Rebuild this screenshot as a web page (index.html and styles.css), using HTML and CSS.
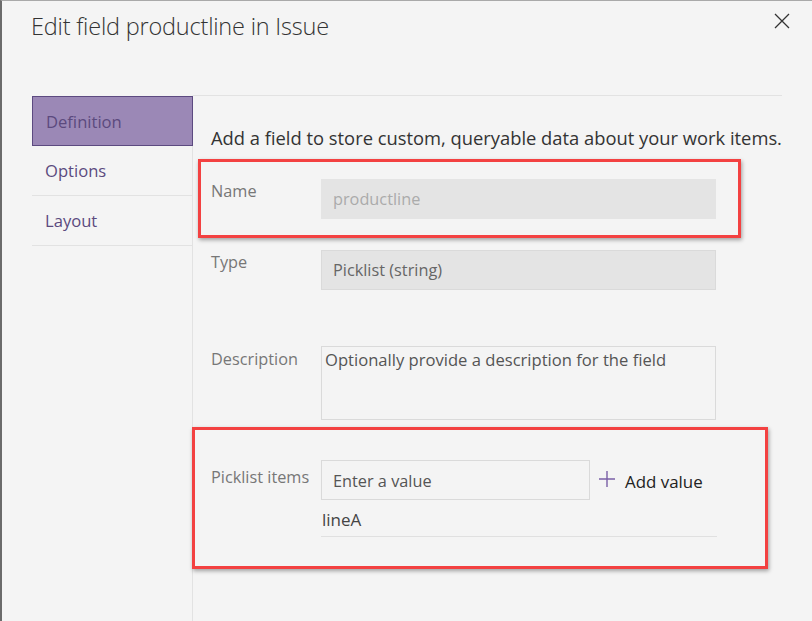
FILE: index.html
```html
<!DOCTYPE html>
<html>
<head>
<meta charset="utf-8">
<link rel="stylesheet" href="styles.css">
</head>
<body>
<div class="dialog">
  <div class="header">
    <h1 class="title">Edit field productline in Issue</h1>
    <button class="close" aria-label="Close">
      <svg width="16" height="16" viewBox="0 0 16 16"><path d="M1 1 L15 15 M15 1 L1 15" stroke="#333" stroke-width="1.3" fill="none"/></svg>
    </button>
  </div>
  <div class="body">
    <nav class="nav">
      <div class="nav-item active">Definition</div>
      <div class="nav-item">Options</div>
      <div class="nav-item">Layout</div>
    </nav>
    <div class="content">
      <p class="intro">Add a field to store custom, queryable data about your work items.</p>
      <div class="row row-name">
        <label class="label">Name</label>
        <div class="input disabled faint">productline</div>
      </div>
      <div class="row row-type">
        <label class="label">Type</label>
        <div class="input disabled bordered">Picklist (string)</div>
      </div>
      <div class="row row-desc">
        <label class="label">Description</label>
        <div class="textarea">Optionally provide a description for the field</div>
      </div>
      <div class="row row-pick">
        <label class="label">Picklist items</label>
        <div class="pick">
          <div class="pick-top">
            <div class="input value-input">Enter a value</div>
            <div class="add">
              <svg width="18" height="18" viewBox="0 0 18 18"><path d="M9 1 V17 M1 9 H17" stroke="#7a5fa6" stroke-width="1.4" fill="none"/></svg>
              <span>Add value</span>
            </div>
          </div>
          <div class="pick-item">lineA</div>
        </div>
      </div>
    </div>
  </div>
  <div class="highlight hl-1"></div>
  <div class="highlight hl-2"></div>
</div>
</body>
</html>
```

FILE: styles.css
```css
* { box-sizing: border-box; }
html, body { margin: 0; padding: 0; }
body {
  font-family: "Open Sans", "Noto Sans", sans-serif;
  background: #f4f4f4;
  color: #333;
}
.dialog {
  position: relative;
  width: 812px;
  height: 621px;
  background: #f4f4f4;
  border-top: 1px solid #a9a9a9;
  border-left: 2px solid #6b6b6b;
  overflow: hidden;
}
.header {
  display: flex;
  justify-content: space-between;
  align-items: flex-start;
  height: 94px;
  padding-left: 29px;
  padding-right: 22px;
}
.title {
  margin: 9px 0 0 0;
  font-size: 23.5px;
  font-weight: 300;
  letter-spacing: -0.2px;
  color: #333;
  line-height: 32px;
}
.close {
  margin-top: 12px;
  border: 0;
  background: none;
  padding: 0;
  width: 16px;
  height: 16px;
}
.body {
  display: flex;
  margin-left: 30px;
  margin-right: 30px;
  height: 526px;
}
.nav {
  width: 161px;
  flex: none;
  border-right: 1px solid #e2e2e2;
  border-top: 1px solid transparent;
}
.nav-item {
  height: 50px;
  line-height: 49px;
  padding-left: 13px;
  font-size: 16.6px;
  color: #5b4a7e;
  border-bottom: 1px solid #e2e2e2;
}
.nav-item.active {
  background: #9b88b6;
  border: 1px solid #5c4a80;
  color: #5b4a7e;
  margin-right: -1px;
}
.content {
  flex: 1;
  border-top: 1px solid #e2e2e2;
  padding-left: 18px;
}
.intro {
  margin: 31px 0 0 0;
  font-size: 18.35px;
  line-height: 22px;
  color: #333;
  white-space: nowrap;
}
.row {
  display: flex;
}
.label {
  width: 110px;
  flex: none;
  font-size: 16.3px;
  color: #777;
  padding-top: 2px;
  line-height: 22px;
  white-space: nowrap;
}
.input {
  width: 395px;
  height: 40px;
  line-height: 38px;
  padding-left: 11px;
  font-size: 16.3px;
  border: 1px solid transparent;
}
.disabled { background: #e4e4e4; }
.faint { color: #ababab; border-color: #e4e4e4; }
.bordered { border-color: #dadada; color: #666; }
.row-name { margin-top: 30px; }
.row-name .label { padding-top: 1px; }
.row-type { margin-top: 31px; }
.row-type .label { padding-top: 1px; }
.row-desc { margin-top: 56px; }
.textarea {
  width: 395px;
  height: 74px;
  border: 1px solid #dadada;
  padding: 2px 3px;
  font-size: 16.6px;
  line-height: 22px;
  color: #555;
}
.row-pick { margin-top: 40px; }
.row-pick .label { padding-top: 6px; }
.pick { display: flex; flex-direction: column; }
.pick-top { display: flex; align-items: center; }
.value-input {
  width: 269px;
  height: 40px;
  border-color: #dadada;
  color: #555;
  line-height: 40px;
}
.add {
  display: flex;
  align-items: center;
  margin-left: 8px;
  font-size: 16.9px;
  color: #222;
}
.add svg { margin-right: 9px; margin-top: -2px; }
.add span { margin-top: 2px; }
.pick-item {
  width: 396px;
  margin-top: 8px;
  padding-left: 1px;
  height: 29px;
  line-height: 24px;
  font-size: 17px;
  color: #444;
  border-bottom: 1px solid #e0e0e0;
}
.highlight {
  position: absolute;
  border: 3px solid #f34141;
  box-shadow: 1px 2px 4px rgba(0,0,0,0.35);
  pointer-events: none;
}
.hl-1 { left: 196px; top: 158px; width: 543px; height: 79px; }
.hl-2 { left: 190px; top: 426px; width: 576px; height: 142px; }
```
